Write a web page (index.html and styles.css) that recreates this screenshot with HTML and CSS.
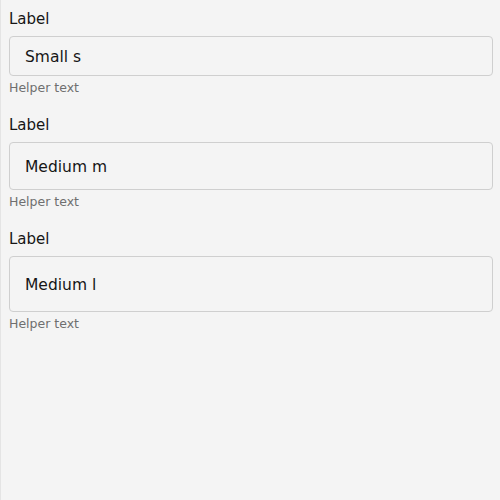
FILE: index.html
```html
<!DOCTYPE html>
<html>
<head>
<meta charset="utf-8">
<link rel="stylesheet" href="styles.css">
</head>
<body>
<div class="page">
  <div class="field">
    <label class="label">Label</label>
    <div class="input size-s">Small s</div>
    <div class="helper">Helper text</div>
  </div>
  <div class="field">
    <label class="label">Label</label>
    <div class="input size-m">Medium m</div>
    <div class="helper">Helper text</div>
  </div>
  <div class="field">
    <label class="label">Label</label>
    <div class="input size-l">Medium l</div>
    <div class="helper">Helper text</div>
  </div>
</div>
</body>
</html>
```
FILE: styles.css
```css
html, body {
  margin: 0;
  padding: 0;
  background: #f4f4f4;
}
body {
  font-family: "DejaVu Sans", "Noto Sans", sans-serif;
  color: #161616;
}
.page {
  min-height: 500px;
  box-sizing: border-box;
  border-left: 1px solid #e4e4e4;
  padding: 8px 7px 0 8px;
  display: flex;
  flex-direction: column;
  gap: 18px;
}
.field {
  display: flex;
  flex-direction: column;
}
.label {
  font-size: 15px;
  line-height: 20px;
  padding-top: 1px;
  margin-bottom: 7px;
}
.input {
  box-sizing: border-box;
  border: 1px solid #cfcfcf;
  border-radius: 4px;
  padding: 2px 15px 0 15px;
  display: flex;
  align-items: center;
  font-size: 15.5px;
}
.size-s { height: 40px; }
.size-m { height: 48px; }
.size-l { height: 56px; }
.helper {
  margin-top: 3px;
  padding-top: 1px;
  font-size: 12.5px;
  line-height: 16px;
  color: #6f6f6f;
}
```
